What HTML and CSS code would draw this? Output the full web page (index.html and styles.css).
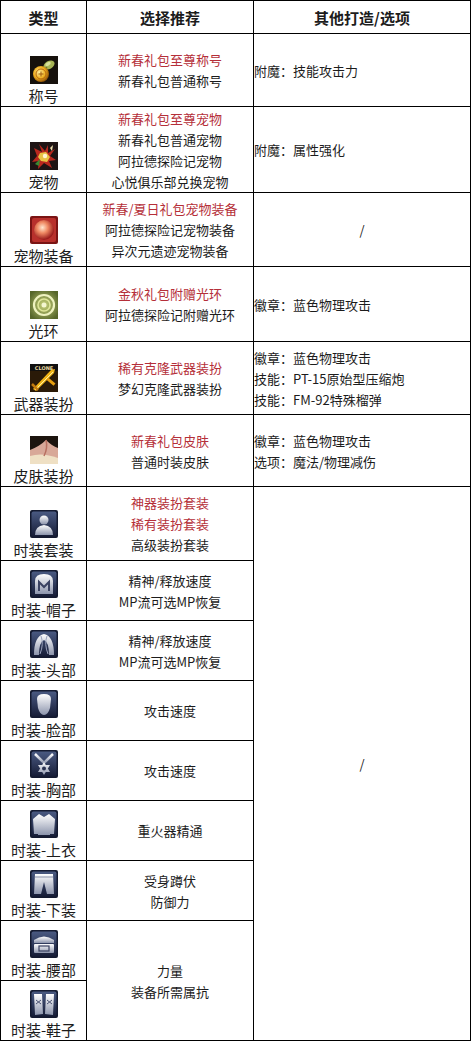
FILE: index.html
```html
<!DOCTYPE html>
<html lang="zh">
<head>
<meta charset="utf-8">
<link rel="stylesheet" href="styles.css">
</head>
<body>
<svg width="0" height="0" class="defs">
  <defs>
    <linearGradient id="navy" x1="0" y1="0" x2="0" y2="1">
      <stop offset="0" stop-color="#4a5a82"/>
      <stop offset="1" stop-color="#161c36"/>
    </linearGradient>
    <linearGradient id="silver" x1="0" y1="0" x2="0" y2="1">
      <stop offset="0" stop-color="#ffffff"/>
      <stop offset="1" stop-color="#8c94ac"/>
    </linearGradient>
    <radialGradient id="orb" cx="0.42" cy="0.38" r="0.6">
      <stop offset="0" stop-color="#ffe6cf"/>
      <stop offset="0.45" stop-color="#f08a64"/>
      <stop offset="1" stop-color="#9a1c1c"/>
    </radialGradient>
    <radialGradient id="halo" cx="0.5" cy="0.5" r="0.6">
      <stop offset="0" stop-color="#c8d27a"/>
      <stop offset="1" stop-color="#56662a"/>
    </radialGradient>
    <radialGradient id="coin" cx="0.4" cy="0.4" r="0.6">
      <stop offset="0" stop-color="#fff0a0"/>
      <stop offset="0.6" stop-color="#f0b020"/>
      <stop offset="1" stop-color="#9a5a08"/>
    </radialGradient>
  </defs>
</svg>
<table class="grid">
  <colgroup>
    <col class="c1"><col class="c2"><col class="c3">
  </colgroup>
  <thead>
    <tr class="h33">
      <th>类型</th><th>选择推荐</th><th>其他打造/选项</th>
    </tr>
  </thead>
  <tbody>
    <tr class="h73">
      <td class="type">
        <svg class="ico" viewBox="0 0 28 28"><rect width="28" height="28" fill="#16110c"/><ellipse cx="19" cy="9" rx="6" ry="4" transform="rotate(-30 19 9)" fill="#a6b454"/><ellipse cx="18" cy="8" rx="3" ry="1.6" transform="rotate(-30 18 8)" fill="#d8e09a"/><path d="M14 14 L17 11" stroke="#6a7a30" stroke-width="1.5"/><circle cx="11" cy="18" r="8" fill="url(#coin)"/><circle cx="11" cy="18" r="5" fill="none" stroke="#b86a10" stroke-width="1"/><path d="M8.5 18 h5 M11 15.5 v5" stroke="#a05a08" stroke-width="1"/></svg>
        <div class="lbl">称号</div>
      </td>
      <td class="rec"><div class="hot">新春礼包至尊称号</div><div>新春礼包普通称号</div></td>
      <td class="opt">附魔：技能攻击力</td>
    </tr>
    <tr class="h86">
      <td class="type">
        <svg class="ico" viewBox="0 0 28 28"><rect width="28" height="28" fill="#1e1414"/><path d="M4 6 L12 10 L9 2 L15 9 L18 3 L18 11 L25 7 L20 14 L26 18 L19 19 L22 26 L14 21 L8 27 L9 19 L2 20 L7 14 Z" fill="#b8281e"/><path d="M10 11 L16 10 L20 15 L17 20 L11 19 L8 15 Z" fill="#e8c244"/><circle cx="15" cy="14" r="2.2" fill="#fff4d0"/><path d="M5 22 L10 17 L9 24 Z" fill="#3c8a30"/><path d="M20 6 L23 3 L22 9 Z" fill="#f0e0b0"/></svg>
        <div class="lbl">宠物</div>
      </td>
      <td class="rec"><div class="hot">新春礼包至尊宠物</div><div>新春礼包普通宠物</div><div>阿拉德探险记宠物</div><div>心悦俱乐部兑换宠物</div></td>
      <td class="opt">附魔：属性强化</td>
    </tr>
    <tr class="h74">
      <td class="type">
        <svg class="ico" viewBox="0 0 28 28"><rect width="28" height="28" rx="2" fill="#7a1414"/><rect x="2" y="2" width="24" height="24" rx="2" fill="#b8302c"/><circle cx="14" cy="14" r="10" fill="url(#orb)"/></svg>
        <div class="lbl">宠物装备</div>
      </td>
      <td class="rec"><div class="hot">新春/夏日礼包宠物装备</div><div>阿拉德探险记宠物装备</div><div>异次元遗迹宠物装备</div></td>
      <td class="opt center">/</td>
    </tr>
    <tr class="h75">
      <td class="type">
        <svg class="ico" viewBox="0 0 28 28"><rect width="28" height="28" fill="url(#halo)"/><circle cx="14" cy="14" r="10" fill="none" stroke="#eef2c0" stroke-width="2.2"/><circle cx="14" cy="14" r="6" fill="none" stroke="#dfe69a" stroke-width="1.6"/><circle cx="14" cy="14" r="2.5" fill="#f4f6d0"/></svg>
        <div class="lbl">光环</div>
      </td>
      <td class="rec"><div class="hot">金秋礼包附赠光环</div><div>阿拉德探险记附赠光环</div></td>
      <td class="opt">徽章：蓝色物理攻击</td>
    </tr>
    <tr class="h73">
      <td class="type">
        <svg class="ico" viewBox="0 0 28 28"><rect width="28" height="28" fill="#2a1a08"/><rect x="0" y="0" width="28" height="7" fill="#101010"/><text x="14" y="5.5" class="clone">CLONE</text><path d="M3 25 L6 27 L24 9 L25 5 L21 6 Z" fill="#f0b418"/><path d="M5 26 L23 8" stroke="#fff0a0" stroke-width="1"/><path d="M2 20 L8 26" stroke="#c07a10" stroke-width="2.5"/><rect x="17" y="16" width="9" height="3" fill="#e8a010" transform="rotate(40 21 17)"/></svg>
        <div class="lbl">武器装扮</div>
      </td>
      <td class="rec"><div class="hot">稀有克隆武器装扮</div><div>梦幻克隆武器装扮</div></td>
      <td class="opt"><div>徽章：蓝色物理攻击</div><div>技能：PT-15原始型压缩炮</div><div>技能：FM-92特殊榴弹</div></td>
    </tr>
    <tr class="h72">
      <td class="type">
        <svg class="ico" viewBox="0 0 28 28"><rect width="28" height="28" fill="#1c140e"/><path d="M0 14 Q10 10 16 4 Q22 10 28 12 L28 28 L0 28 Z" fill="#d8a898"/><path d="M0 20 Q12 16 28 22 L28 28 L0 28 Z" fill="#efe0c4"/><path d="M16 4 Q18 12 14 20" stroke="#b87060" stroke-width="1.5" fill="none"/></svg>
        <div class="lbl">皮肤装扮</div>
      </td>
      <td class="rec"><div class="hot">新春礼包皮肤</div><div>普通时装皮肤</div></td>
      <td class="opt"><div>徽章：蓝色物理攻击</div><div>选项：魔法/物理减伤</div></td>
    </tr>
    <tr class="h74">
      <td class="type">
        <svg class="ico" viewBox="0 0 28 28"><rect width="28" height="28" rx="2" fill="#141a30"/><rect x="1.5" y="1.5" width="25" height="25" rx="2" fill="url(#navy)"/><circle cx="14" cy="10" r="4.5" fill="url(#silver)"/><path d="M5 25 Q5 16 14 15 Q23 16 23 25 Z" fill="url(#silver)"/></svg>
        <div class="lbl">时装套装</div>
      </td>
      <td class="rec"><div class="hot">神器装扮套装</div><div class="hot">稀有装扮套装</div><div>高级装扮套装</div></td>
      <td class="opt center" rowspan="9">/</td>
    </tr>
    <tr class="h60">
      <td class="type">
        <svg class="ico" viewBox="0 0 28 28"><rect width="28" height="28" rx="2" fill="#141a30"/><rect x="1.5" y="1.5" width="25" height="25" rx="2" fill="url(#navy)"/><path d="M5 24 L5 11 Q5 4 14 4 Q23 4 23 11 L23 24 Z" fill="url(#silver)"/><path d="M9 21 L9 12 L14 17 L19 12 L19 21" stroke="#3a4262" stroke-width="2" fill="none"/></svg>
        <div class="lbl">时装-帽子</div>
      </td>
      <td class="rec"><div>精神/释放速度</div><div>MP流可选MP恢复</div></td>
    </tr>
    <tr class="h60">
      <td class="type">
        <svg class="ico" viewBox="0 0 28 28"><rect width="28" height="28" rx="2" fill="#141a30"/><rect x="1.5" y="1.5" width="25" height="25" rx="2" fill="url(#navy)"/><path d="M4 25 Q4 6 14 4 Q24 6 24 25 L19 25 Q19 12 14 10 Q9 12 9 25 Z" fill="url(#silver)"/><path d="M11 6 Q14 14 10 24 M17 6 Q14 14 18 24" stroke="#9aa2bc" stroke-width="1" fill="none"/></svg>
        <div class="lbl">时装-头部</div>
      </td>
      <td class="rec"><div>精神/释放速度</div><div>MP流可选MP恢复</div></td>
    </tr>
    <tr class="h60">
      <td class="type">
        <svg class="ico" viewBox="0 0 28 28"><rect width="28" height="28" rx="2" fill="#141a30"/><rect x="1.5" y="1.5" width="25" height="25" rx="2" fill="url(#navy)"/><path d="M7 9 Q7 4 14 4 Q21 4 21 9 L20 18 Q18 25 14 25 Q10 25 8 18 Z" fill="url(#silver)"/></svg>
        <div class="lbl">时装-脸部</div>
      </td>
      <td class="rec"><div>攻击速度</div></td>
    </tr>
    <tr class="h60">
      <td class="type">
        <svg class="ico" viewBox="0 0 28 28"><rect width="28" height="28" rx="2" fill="#141a30"/><rect x="1.5" y="1.5" width="25" height="25" rx="2" fill="url(#navy)"/><path d="M5 4 L14 13 L23 4" stroke="url(#silver)" stroke-width="2.5" fill="none"/><path d="M14 12 L20 22 L8 22 Z M14 25 L8 15 L20 15 Z" fill="url(#silver)"/><circle cx="14" cy="18.5" r="2" fill="#2a3252"/></svg>
        <div class="lbl">时装-胸部</div>
      </td>
      <td class="rec"><div>攻击速度</div></td>
    </tr>
    <tr class="h60">
      <td class="type">
        <svg class="ico" viewBox="0 0 28 28"><rect width="28" height="28" rx="2" fill="#141a30"/><rect x="1.5" y="1.5" width="25" height="25" rx="2" fill="url(#navy)"/><path d="M9 4 L14 7 L19 4 L25 9 L24 24 L20 24 L20 14 L20 25 L8 25 L8 14 L8 24 L4 24 L3 9 Z" fill="url(#silver)"/></svg>
        <div class="lbl">时装-上衣</div>
      </td>
      <td class="rec"><div>重火器精通</div></td>
    </tr>
    <tr class="h60">
      <td class="type">
        <svg class="ico" viewBox="0 0 28 28"><rect width="28" height="28" rx="2" fill="#141a30"/><rect x="1.5" y="1.5" width="25" height="25" rx="2" fill="url(#navy)"/><path d="M5 4 L23 4 L24 24 L17 24 L14 12 L11 24 L4 24 Z" fill="url(#silver)"/><path d="M5 7 L23 7" stroke="#8890a8" stroke-width="1"/></svg>
        <div class="lbl">时装-下装</div>
      </td>
      <td class="rec"><div>受身蹲伏</div><div>防御力</div></td>
    </tr>
    <tr class="h60">
      <td class="type">
        <svg class="ico" viewBox="0 0 28 28"><rect width="28" height="28" rx="2" fill="#141a30"/><rect x="1.5" y="1.5" width="25" height="25" rx="2" fill="url(#navy)"/><path d="M4 10 Q14 3 24 10 L24 13 L4 13 Z" fill="url(#silver)"/><rect x="4" y="14" width="20" height="9" rx="1" fill="url(#silver)"/><rect x="9" y="16" width="10" height="5" fill="none" stroke="#3a4262" stroke-width="1.2"/></svg>
        <div class="lbl">时装-腰部</div>
      </td>
      <td class="rec" rowspan="2"><div>力量</div><div>装备所需属抗</div></td>
    </tr>
    <tr class="h60">
      <td class="type">
        <svg class="ico" viewBox="0 0 28 28"><rect width="28" height="28" rx="2" fill="#141a30"/><rect x="1.5" y="1.5" width="25" height="25" rx="2" fill="url(#navy)"/><path d="M4 4 L12 4 L13 24 L5 25 Z M16 4 L24 4 L23 25 L15 24 Z" fill="url(#silver)"/><path d="M6 10 L11 14 M6 14 L11 10 M17 10 L22 14 M17 14 L22 10" stroke="#4a5272" stroke-width="1"/></svg>
        <div class="lbl">时装-鞋子</div>
      </td>
    </tr>
  </tbody>
</table>
</body>
</html>
```
FILE: styles.css
```css
html, body {
  margin: 0;
  padding: 0;
  background: #ffffff;
}
body {
  font-family: "Noto Sans CJK SC", "Noto Sans", sans-serif;
  color: #1c1c1c;
}
.defs {
  position: absolute;
  width: 0;
  height: 0;
}
.grid {
  border-collapse: collapse;
  table-layout: fixed;
  width: 470px;
}
.c1 { width: 86px; }
.c2 { width: 167px; }
.c3 { width: 217px; }
.grid th,
.grid td {
  border: 1px solid #000;
  padding: 0;
}
.grid th {
  font-size: 15px;
  font-weight: bold;
  text-align: center;
  vertical-align: middle;
}
.h33 { height: 33px; }
.h60 { height: 60px; }
.h72 { height: 72px; }
.h73 { height: 73px; }
.h74 { height: 74px; }
.h75 { height: 75px; }
.h86 { height: 86px; }
.type {
  text-align: center;
  vertical-align: bottom;
  padding-bottom: 1px;
}
.ico {
  display: block;
  width: 28px;
  height: 28px;
  margin: 0 auto 2px;
}
.lbl {
  font-size: 15px;
  line-height: 20px;
}
.rec {
  text-align: center;
  vertical-align: middle;
  font-size: 13px;
  line-height: 21px;
}
.hot {
  color: #b52f39;
}
.opt {
  vertical-align: middle;
  font-size: 13px;
  line-height: 21px;
  padding-left: 2px;
}
.opt.center {
  text-align: center;
  padding-left: 0;
}
.clone {
  font-family: "DejaVu Sans", sans-serif;
  font-size: 5px;
  font-weight: bold;
  fill: #e8d8a0;
  text-anchor: middle;
}
```
